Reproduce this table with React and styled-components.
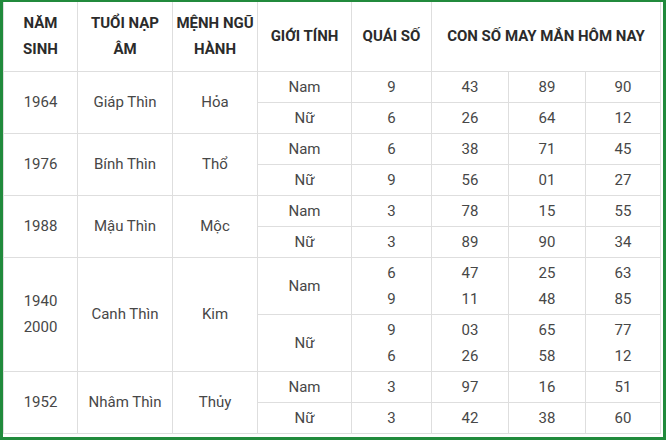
import styled, { createGlobalStyle } from "styled-components";

const GlobalStyle = createGlobalStyle`
	html, body {
		margin: 0;
		padding: 0;
		background: #ffffff;
	}
`;

const Frame = styled.div`
	width: 666px;
	height: 440px;
	box-sizing: border-box;
	border: 3px solid #218a3c;
	border-top-width: 2px;
	background: #ffffff;
	padding-right: 3px;
	overflow: hidden;
`;

const Table = styled.table`
	width: 657px;
	border-collapse: collapse;
	table-layout: fixed;
	font-family: Roboto, "Liberation Sans", sans-serif;
	font-size: 15px;
	line-height: 26px;
	text-align: center;
`;

const HeadRow = styled.tr`
	height: 69px;
`;

const Row = styled.tr`
	height: ${(p) => (p.$double ? "57px" : "31px")};
`;

const HeadCell = styled.th`
	border: 1px solid #dedede;
	border-top: none;
	color: #2b2b2b;
	font-weight: 700;
	padding: 0 2px;
	vertical-align: middle;
`;

const Cell = styled.td`
	border: 1px solid #dedede;
	color: #474747;
	font-weight: 400;
	padding: 0 2px;
	vertical-align: middle;
`;

const widths = [74, 95, 85, 94, 80, 77, 77, 75];

const groups = [
	{
		years: ["1964"],
		napAm: "Giáp Thìn",
		menh: "Hỏa",
		rows: [
			{ sex: "Nam", quai: ["9"], nums: [["43"], ["89"], ["90"]] },
			{ sex: "Nữ", quai: ["6"], nums: [["26"], ["64"], ["12"]] },
		],
	},
	{
		years: ["1976"],
		napAm: "Bính Thìn",
		menh: "Thổ",
		rows: [
			{ sex: "Nam", quai: ["6"], nums: [["38"], ["71"], ["45"]] },
			{ sex: "Nữ", quai: ["9"], nums: [["56"], ["01"], ["27"]] },
		],
	},
	{
		years: ["1988"],
		napAm: "Mậu Thìn",
		menh: "Mộc",
		rows: [
			{ sex: "Nam", quai: ["3"], nums: [["78"], ["15"], ["55"]] },
			{ sex: "Nữ", quai: ["3"], nums: [["89"], ["90"], ["34"]] },
		],
	},
	{
		years: ["1940", "2000"],
		napAm: "Canh Thìn",
		menh: "Kim",
		rows: [
			{ sex: "Nam", quai: ["6", "9"], nums: [["47", "11"], ["25", "48"], ["63", "85"]] },
			{ sex: "Nữ", quai: ["9", "6"], nums: [["03", "26"], ["65", "58"], ["77", "12"]] },
		],
	},
	{
		years: ["1952"],
		napAm: "Nhâm Thìn",
		menh: "Thủy",
		rows: [
			{ sex: "Nam", quai: ["3"], nums: [["97"], ["16"], ["51"]] },
			{ sex: "Nữ", quai: ["3"], nums: [["42"], ["38"], ["60"]] },
		],
	},
];

const Lines = function ({ items }) {
	return items.map((t, i) => (
		<span key={i}>
			{i > 0 && <br />}
			{t}
		</span>
	));
};

export default function App() {
	return (
		<Frame>
			<GlobalStyle />
			<Table>
				<colgroup>
					{widths.map((w, i) => (
						<col key={i} style={{ width: w }} />
					))}
				</colgroup>
				<thead>
					<HeadRow>
						<HeadCell>
							NĂM
							<br />
							SINH
						</HeadCell>
						<HeadCell>
							TUỔI NẠP
							<br />
							ÂM
						</HeadCell>
						<HeadCell>
							MỆNH NGŨ
							<br />
							HÀNH
						</HeadCell>
						<HeadCell>GIỚI TÍNH</HeadCell>
						<HeadCell>QUÁI SỐ</HeadCell>
						<HeadCell colSpan={3}>CON SỐ MAY MẮN HÔM NAY</HeadCell>
					</HeadRow>
				</thead>
				<tbody>
					{groups.map((g) =>
						g.rows.map((r, i) => (
							<Row key={g.years[0] + r.sex} $double={r.quai.length > 1}>
								{i === 0 && (
									<>
										<Cell rowSpan={2}>
											<Lines items={g.years} />
										</Cell>
										<Cell rowSpan={2}>{g.napAm}</Cell>
										<Cell rowSpan={2}>{g.menh}</Cell>
									</>
								)}
								<Cell>{r.sex}</Cell>
								<Cell>
									<Lines items={r.quai} />
								</Cell>
								{r.nums.map((n, j) => (
									<Cell key={j}>
										<Lines items={n} />
									</Cell>
								))}
							</Row>
						))
					)}
				</tbody>
			</Table>
		</Frame>
	);
}
